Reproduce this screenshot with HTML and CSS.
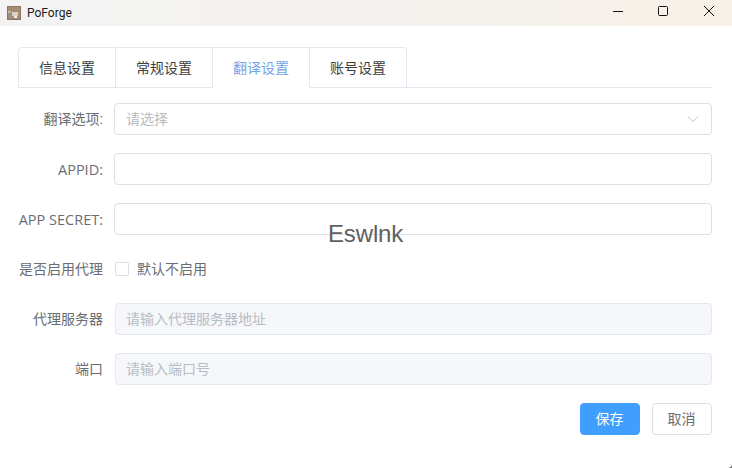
FILE: index.html
```html
<!DOCTYPE html>
<html lang="zh-CN">
<head>
<meta charset="utf-8">
<title>PoForge</title>
<link rel="stylesheet" href="styles.css">
</head>
<body>
<div class="window">
  <header class="titlebar">
    <div class="brand">
      <svg class="logo" width="14" height="14" viewBox="0 0 14 14"><rect width="14" height="14" fill="#8d7560"/><rect x="1" y="1" width="12" height="12" fill="#a48d77"/><rect x="5" y="6" width="6" height="4" fill="#d9d2c8"/><rect x="1" y="5" width="3" height="2" fill="#c9b8a5"/><rect x="7" y="10" width="3" height="2" fill="#f3efe8"/></svg>
      <span class="app-name">PoForge</span>
    </div>
    <div class="controls">
      <svg class="control" width="46" height="26" viewBox="0 0 46 26"><path d="M19 11.5h10" stroke="#111" fill="none"/></svg>
      <svg class="control" width="46" height="26" viewBox="0 0 46 26"><rect x="18.5" y="6.5" width="9" height="9" rx="1" stroke="#111" fill="none"/></svg>
      <svg class="control" width="46" height="26" viewBox="0 0 46 26"><path d="M18 6l10 10M28 6L18 16" stroke="#111" fill="none"/></svg>
    </div>
  </header>
  <main class="content">
    <nav class="tabs">
      <div class="tab">信息设置</div>
      <div class="tab">常规设置</div>
      <div class="tab active">翻译设置</div>
      <div class="tab">账号设置</div>
    </nav>
    <form class="form">
      <div class="row">
        <label class="label">翻译选项:</label>
        <div class="field select"><span class="placeholder">请选择</span>
          <svg width="12" height="8" viewBox="0 0 12 8"><path d="M1 1.5l5 5 5-5" stroke="#c0c4cc" fill="none"/></svg>
        </div>
      </div>
      <div class="row">
        <label class="label latin">APPID:</label>
        <div class="field"></div>
      </div>
      <div class="row">
        <label class="label latin">APP SECRET:</label>
        <div class="field"></div>
      </div>
      <div class="row">
        <label class="label">是否启用代理</label>
        <div class="check"><span class="box"></span><span class="check-text">默认不启用</span></div>
      </div>
      <div class="row">
        <label class="label">代理服务器</label>
        <div class="field disabled"><span class="placeholder">请输入代理服务器地址</span></div>
      </div>
      <div class="row">
        <label class="label">端口</label>
        <div class="field disabled"><span class="placeholder">请输入端口号</span></div>
      </div>
      <div class="actions">
        <button type="button" class="btn primary">保存</button>
        <button type="button" class="btn">取消</button>
      </div>
    </form>
  </main>
  <div class="watermark">Eswlnk</div>
  <div class="corner"></div>
</div>
</body>
</html>
```
FILE: styles.css
```css
* { box-sizing: border-box; }
html, body { margin: 0; padding: 0; width: 732px; height: 468px; overflow: hidden; background: #fff; }
body { font-family: "Roboto", "Noto Sans CJK SC", sans-serif; color: #6a6d73; font-size: 14px; }
.window { position: relative; width: 732px; height: 468px; background: #fff; display: flex; flex-direction: column; }
.titlebar { height: 26px; flex: none; display: flex; justify-content: space-between; background: linear-gradient(90deg, #f3f3f3 0%, #f4f2ef 50%, #f7f0e7 100%); }
.brand { display: flex; align-items: center; gap: 6px; padding-left: 7px; }
.logo { display: block; }
.app-name { font-family: "Roboto", sans-serif; font-size: 12px; color: #1c1c1c; }
.controls { display: flex; }
.control { display: block; }
.content { flex: 1; padding: 21px 20px 0 18px; }
.tabs { display: flex; height: 41px; border-bottom: 1px solid #e4e7ed; }
.tab { width: 97px; height: 41px; border: 1px solid #e4e7ed; border-left: 0; display: flex; align-items: center; justify-content: center; padding-bottom: 2px; color: #3c3e42; font-size: 14px; }
.tab:first-child { border-left: 1px solid #e4e7ed; border-top-left-radius: 4px; width: 98px; }
.tab:last-child { border-top-right-radius: 4px; }
.tab.active { color: #73a5ea; border-bottom-color: #fff; }
.form { display: flex; flex-direction: column; gap: 18px; padding-top: 15px; }
.row { display: flex; align-items: center; height: 32px; }
.label { width: 85px; margin-right: 11px; padding-bottom: 2px; white-space: nowrap; display: flex; justify-content: flex-end; }
.label.latin { font-family: "Open Sans", sans-serif; font-size: 14.5px; padding-bottom: 0; }
.field { flex: 1; height: 32px; border: 1px solid #dcdfe6; border-radius: 4px; background: #fff; display: flex; align-items: center; justify-content: space-between; padding: 0 12px 0 11px; }
.disabled { background: #f5f7fa; border-color: #e4e7ed; margin-left: 1px; padding-left: 10px; }
.placeholder { color: #b8bcc4; font-size: 14px; padding-bottom: 2px; }
.check { display: flex; align-items: center; gap: 8px; margin-left: 1px; }
.box { width: 14px; height: 14px; border: 1px solid #dcdfe6; border-radius: 2px; background: #fff; }
.check-text { font-size: 14px; padding-bottom: 2px; }
.actions { display: flex; justify-content: flex-end; gap: 12px; }
.btn { width: 60px; height: 32px; padding: 0 1px 2px 0; border: 1px solid #dcdfe6; border-radius: 4px; background: #fff; color: #6a6d73; font: inherit; }
.btn.primary { background: #409eff; border-color: #409eff; color: #fff; }
.watermark { position: absolute; left: 328px; top: 220px; font-family: "Liberation Sans", sans-serif; font-size: 24px; line-height: 28px; letter-spacing: -0.15px; color: #606060; }
.corner { position: absolute; right: 0; bottom: 0; width: 4px; height: 4px; background: radial-gradient(circle at 0 0, transparent 3.5px, #777 4px); }
```
